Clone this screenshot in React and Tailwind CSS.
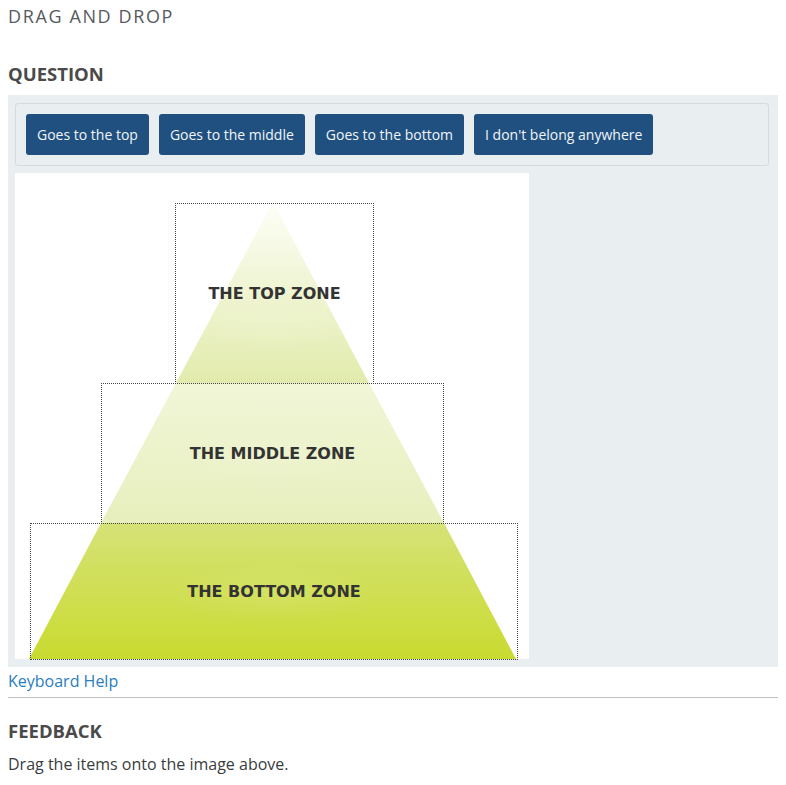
export default function App() {
  const buttons = ["Goes to the top", "Goes to the middle", "Goes to the bottom", "I don't belong anywhere"];
  const zones = [
    { label: "THE TOP ZONE", cls: "left-[160px] top-[30px] w-[199px] h-[181px]" },
    { label: "THE MIDDLE ZONE", cls: "left-[86px] top-[210px] w-[343px] h-[141px]" },
    { label: "THE BOTTOM ZONE", cls: "left-[15px] top-[350px] w-[488px] h-[137px]" },
  ];
  return (
    <div className="px-2 bg-white min-h-[785px] text-[#373a3c]" style={{ fontFamily: '"Open Sans", sans-serif' }}>
      <div className="pt-[4px] text-[18px] leading-[24px] tracking-[0.09em] text-[#575a5e]">DRAG AND DROP</div>
      <div className="mt-[34px] text-[18.5px] leading-[24px] font-bold text-[#4a4a4a]">QUESTION</div>
      <div className="mt-[9px] w-[770px] bg-[#e9eef1] pl-[7px] pt-[8px] pb-[8px]">
        <div className="w-[754px] h-[63px] border border-[#d6dadd] rounded-[3px] p-[10px] flex gap-[10px]">
          {buttons.map((b) => (
            <div key={b} className="h-[41px] px-[11px] flex items-center bg-[#1f5080] text-[#f2f5f8] text-[14px] rounded-[3px]">
              {b}
            </div>
          ))}
        </div>
        <div className="mt-[7px] relative w-[514px] h-[486px] bg-white">
          <svg width="514" height="486" className="absolute left-0 top-0">
            <defs>
              <linearGradient id="g1" x1="0" y1="0" x2="0" y2="1">
                <stop offset="0" stopColor="#fdfef7" />
                <stop offset="1" stopColor="#e2ebac" />
              </linearGradient>
              <linearGradient id="g2" x1="0" y1="0" x2="0" y2="1">
                <stop offset="0" stopColor="#f1f6d8" />
                <stop offset="1" stopColor="#e7efbd" />
              </linearGradient>
              <linearGradient id="g3" x1="0" y1="0" x2="0" y2="1">
                <stop offset="0" stopColor="#d6e277" />
                <stop offset="1" stopColor="#c9db30" />
              </linearGradient>
              <radialGradient id="glow" cx="0.5" cy="0.5" r="0.5">
                <stop offset="0" stopColor="#ffffff" stopOpacity="0.1" />
                <stop offset="1" stopColor="#ffffff" stopOpacity="0" />
              </radialGradient>
            </defs>
            <polygon points="258,29 354,210 161,210" fill="url(#g1)" />
            <polygon points="161,210 354,210 429,350 86,350" fill="url(#g2)" />
            <polygon points="86,350 429,350 501,486 14,486" fill="url(#g3)" />
            <ellipse cx="258" cy="150" rx="90" ry="30" fill="url(#glow)" />
            <ellipse cx="258" cy="285" rx="100" ry="30" fill="url(#glow)" />
            <ellipse cx="258" cy="420" rx="110" ry="30" fill="url(#glow)" />
          </svg>
          {zones.map((z) => (
            <div
              key={z.label}
              className={`absolute ${z.cls} border border-dotted border-[#444] flex items-center justify-center text-[16px] font-bold text-[#333]`}
              style={{ fontFamily: '"DejaVu Sans", sans-serif' }}
            >
              {z.label}
            </div>
          ))}
        </div>
      </div>
      <div className="mt-[2px] text-[16px] leading-[24px] text-[#2a7dc0]">Keyboard Help</div>
      <div className="mt-[4px] w-[770px] border-t border-[#c2c2c2]" />
      <div className="mt-[21px] text-[18.5px] leading-[24px] font-bold text-[#4a4a4a]">FEEDBACK</div>
      <div className="mt-[9px] text-[16px] leading-[24px] text-[#3a3d40]">Drag the items onto the image above.</div>
    </div>
  );
}
